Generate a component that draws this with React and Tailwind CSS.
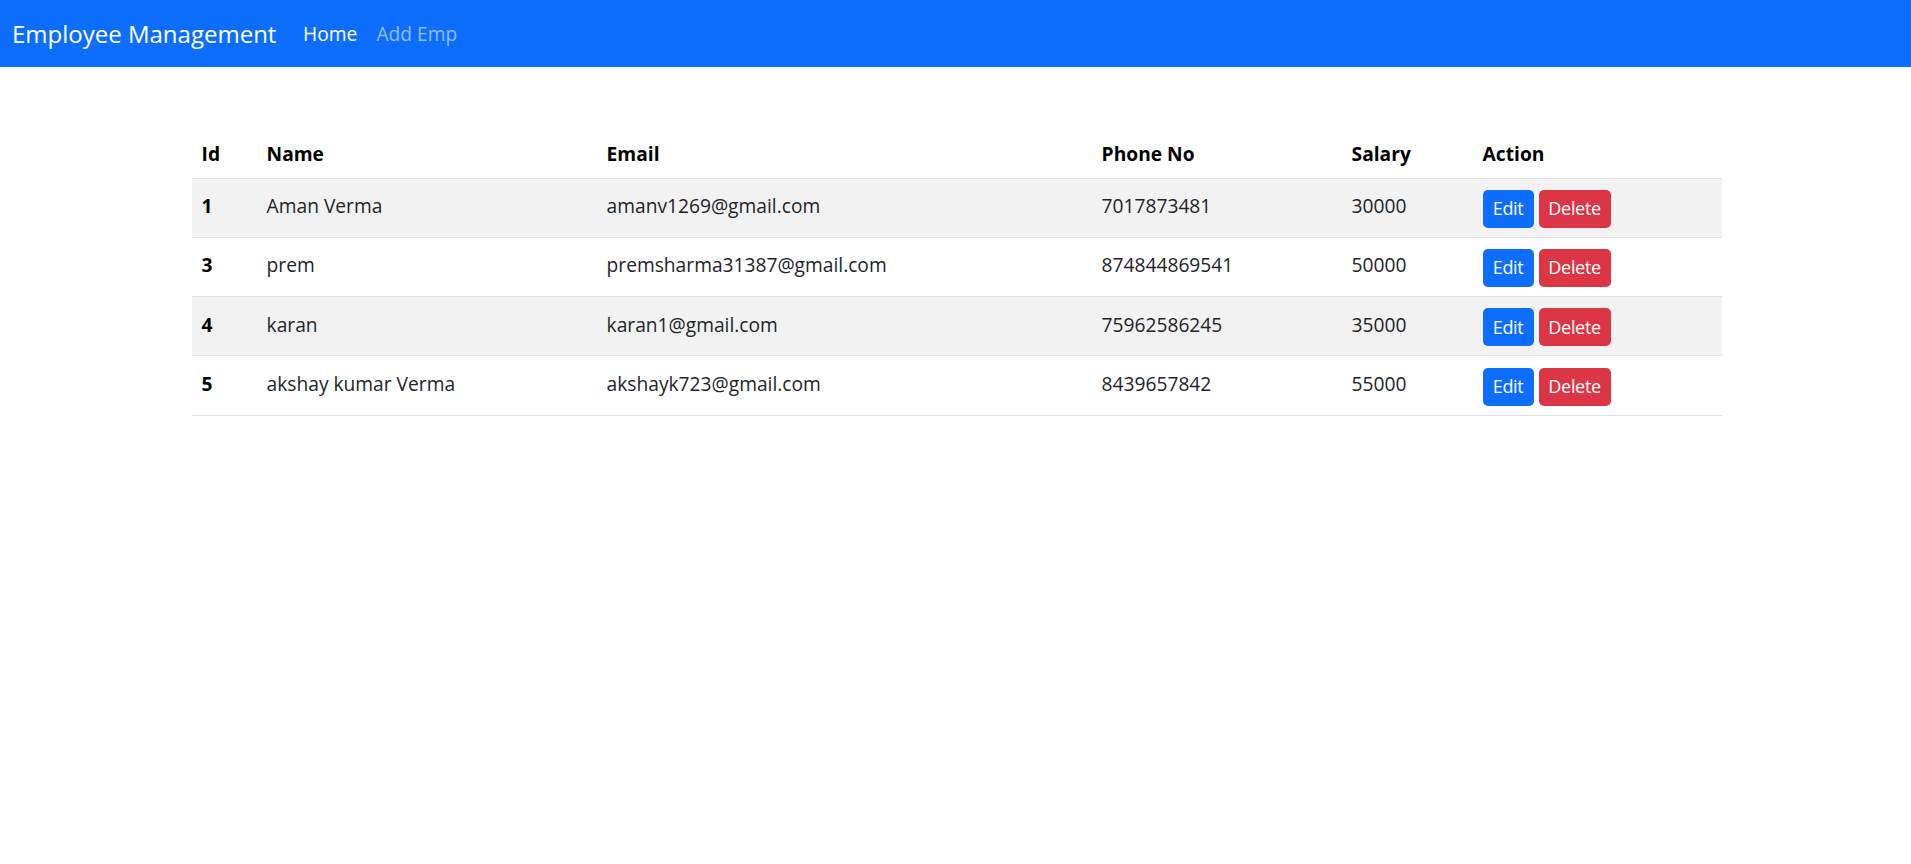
import React from "react";

const rows = [
  { id: 1, name: "Aman Verma", email: "amanv1269@gmail.com", phone: "7017873481", salary: "30000" },
  { id: 3, name: "prem", email: "premsharma31387@gmail.com", phone: "874844869541", salary: "50000" },
  { id: 4, name: "karan", email: "karan1@gmail.com", phone: "75962586245", salary: "35000" },
  { id: 5, name: "akshay kumar Verma", email: "akshayk723@gmail.com", phone: "8439657842", salary: "55000" },
];

export default function App() {
  return (
    <div className="min-h-screen bg-white text-[#212529] font-['Open_Sans',sans-serif]">
      <nav className="h-[67px] bg-[#0d6efd] flex items-center pl-[12px]">
        <span className="text-white text-[24px] leading-[36px] mr-[17px]">Employee Management</span>
        <span className="text-white text-[19.2px] leading-[29px] px-[9.6px]">Home</span>
        <span className="text-[#92befe] text-[19.2px] leading-[29px] px-[9.6px]">Add Emp</span>
      </nav>
      <div className="w-[1530px] ml-[192px] mt-[63px]">
        <table className="w-full table-fixed border-collapse text-[19.2px] leading-[29px]">
          <colgroup>
            <col className="w-[65px]" />
            <col className="w-[340px]" />
            <col className="w-[495px]" />
            <col className="w-[250px]" />
            <col className="w-[131px]" />
            <col />
          </colgroup>
          <thead>
            <tr className="border-b border-[#dee2e6]">
              {["Id", "Name", "Email", "Phone No", "Salary", "Action"].map((h) => (
                <th key={h} className="h-[48px] px-[9.6px] text-left font-bold align-middle text-[#000]">{h}</th>
              ))}
            </tr>
          </thead>
          <tbody>
            {rows.map((r, i) => (
              <tr key={r.id} className={`border-b border-[#dee2e6] ${i % 2 === 0 ? "bg-[#f2f2f2]" : "bg-white"}`}>
                <td className="h-[59.3px] px-[9.6px] font-bold align-middle text-[#000] pb-[4px]">{r.id}</td>
                <td className="px-[9.6px] align-middle pb-[4px]">{r.name}</td>
                <td className="px-[9.6px] align-middle pb-[4px]">{r.email}</td>
                <td className="px-[9.6px] align-middle pb-[4px]">{r.phone}</td>
                <td className="px-[9.6px] align-middle pb-[4px]">{r.salary}</td>
                <td className="px-[9.6px] align-middle">
                  <div className="flex gap-[5px] pt-[2px]">
                    <button className="h-[38px] w-[51px] rounded-[5px] bg-[#0d6efd] text-white text-[18px] tracking-[-0.3px] leading-[27px]">Edit</button>
                    <button className="h-[38px] w-[72px] rounded-[5px] bg-[#dc3545] text-white text-[18px] tracking-[-0.3px] leading-[27px]">Delete</button>
                  </div>
                </td>
              </tr>
            ))}
          </tbody>
        </table>
      </div>
    </div>
  );
}
